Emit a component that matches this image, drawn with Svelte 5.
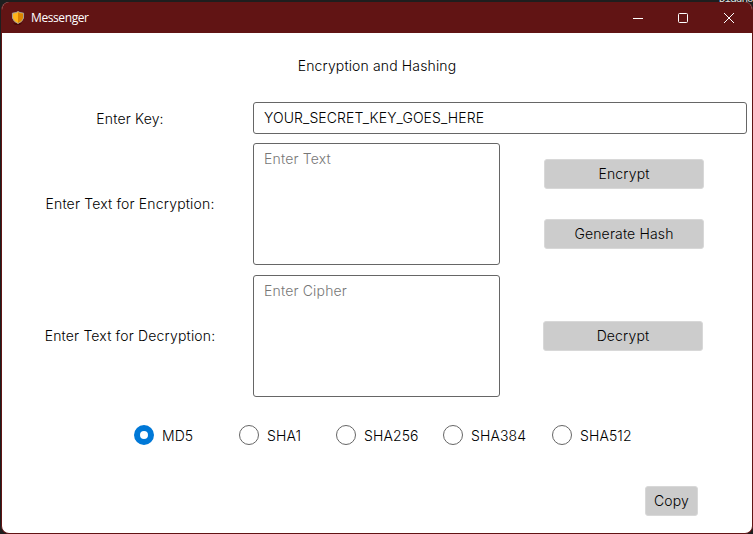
<script>
  const hashes = [
    { name: 'MD5', width: 105 },
    { name: 'SHA1', width: 97 },
    { name: 'SHA256', width: 107 },
    { name: 'SHA384', width: 109 },
    { name: 'SHA512', width: 90 }
  ];
  let selected = $state('MD5');
  let key = $state('YOUR_SECRET_KEY_GOES_HERE');
</script>

<div class="desktop">
  <span class="behind">Diagno</span>
  <div class="window">
    <header>
      <svg class="shield" width="14" height="15" viewBox="0 0 14 15">
        <path d="M2 12h9l-2 2H4z" fill="#4b0908" />
        <path d="M7 .5 9 1.6 12.6 2.2 12.5 7Q11.5 10.7 7 12.5 2.5 10.7 1.5 7L1.4 2.2 5 1.6z" fill="#ffb51b" stroke="#a4a29a" />
        <path d="M7 1.2 9 2.2 12 2.7 12 7Q11 10.2 7 12z" fill="#dc8500" />
      </svg>
      <span class="name">Messenger</span>
      <svg class="controls" width="112" height="12" viewBox="0 0 112 12" fill="none" stroke="#fff">
        <path d="M1 6.5h10" />
        <rect x="46.5" y="1.5" width="9" height="9" rx="1" />
        <path d="m92 1 10 10m0-10L92 11" />
      </svg>
    </header>
    <main>
      <h1>Encryption and Hashing</h1>
      <div class="row key">
        <label for="key">Enter Key:</label>
        <input id="key" bind:value={key} />
      </div>
      <div class="row">
        <label for="plain">Enter Text for Encryption:</label>
        <textarea id="plain" placeholder="Enter Text"></textarea>
        <div class="actions">
          <button>Encrypt</button>
          <button>Generate Hash</button>
        </div>
      </div>
      <div class="row">
        <label for="cipher">Enter Text for Decryption:</label>
        <textarea id="cipher" placeholder="Enter Cipher"></textarea>
        <div class="actions single"><button>Decrypt</button></div>
      </div>
      <div class="radios">
        {#each hashes as hash}
          <label style:width="{hash.width}px">
            <input type="radio" name="hash" value={hash.name} bind:group={selected} />
            <span>{hash.name}</span>
          </label>
        {/each}
      </div>
      <div class="footer"><button>Copy</button></div>
    </main>
  </div>
</div>

<style>
  :global(body) { margin: 0; background: #1e1e1e; overflow: hidden; }
  * { box-sizing: border-box; }
  .desktop {
    position: relative; width: 753px; height: 534px; padding: 2px 0 0 1px;
    overflow: hidden; background: #1e1e1e;
    font: 300 14px/20px Inter, "Liberation Sans", sans-serif; color: #000;
  }
  .behind {
    position: absolute; left: 719px; top: -8px;
    font: 11px/14px "DejaVu Sans Mono", monospace; letter-spacing: -1px; color: #ddd;
  }
  .window {
    position: relative; width: 752px; height: 532px; overflow: hidden;
    border: 1px solid #611414; border-top: 0; border-radius: 8px; background: #fff;
  }
  header { display: flex; align-items: center; height: 31px; padding: 0 8px 0 9px; background: #611414; }
  .shield { margin-top: 1px; }
  .name { margin-left: 6px; color: #fff; font: 12px/16px "Open Sans", "Noto Sans", sans-serif; letter-spacing: -0.4px; }
  .controls { margin-left: auto; }
  main { display: flex; flex-direction: column; }
  h1 { margin: 23px 0 0; text-align: center; font: inherit; letter-spacing: 0.14px; }
  .row { display: flex; align-items: center; height: 122px; margin: 0 5px 10px 3px; }
  .key { height: 32px; margin-top: 26px; margin-bottom: 9px; }
  .row label { width: 251px; padding-right: 1px; flex: none; text-align: center; letter-spacing: 0.17px; }
  .row > label { margin-right: -3px; }
  .key label { padding-top: 2px; }
  .row input, textarea {
    height: 100%; margin: 0; border: 1px solid #666; border-radius: 3px;
    padding: 5px 10px; outline: 0; background: #fff; color: #000; font: inherit; letter-spacing: 0.1px; resize: none;
  }
  .row input { flex: 1; min-width: 0; padding: 4px 10px 6px; }
  textarea { width: 247px; overflow: hidden; letter-spacing: 0.17px; }
  textarea::placeholder { color: #777; opacity: 1; }
  .actions { display: flex; flex-direction: column; gap: 30px; margin-left: 44px; }
  .single { margin-left: 43px; }
  button { width: 160px; height: 30px; padding: 0; border: 1px solid #d8d8d8; border-radius: 3px; background: #ccc; color: #000; font: inherit; letter-spacing: 0.15px; }
  .radios { display: flex; height: 20px; margin: 18px 0 0 132px; }
  .radios label { display: flex; align-items: center; gap: 8px; }
  .radios span { padding-top: 2px; letter-spacing: 0.1px; }
  .radios input { appearance: none; width: 20px; height: 20px; margin: 0; border: 1px solid #666; border-radius: 50%; background: #fff; }
  .radios input:checked { border: 6px solid #0078d7; }
  .footer { display: flex; justify-content: flex-end; margin: 41px 54px 0 0; }
  .footer button { width: 53px; }
</style>
